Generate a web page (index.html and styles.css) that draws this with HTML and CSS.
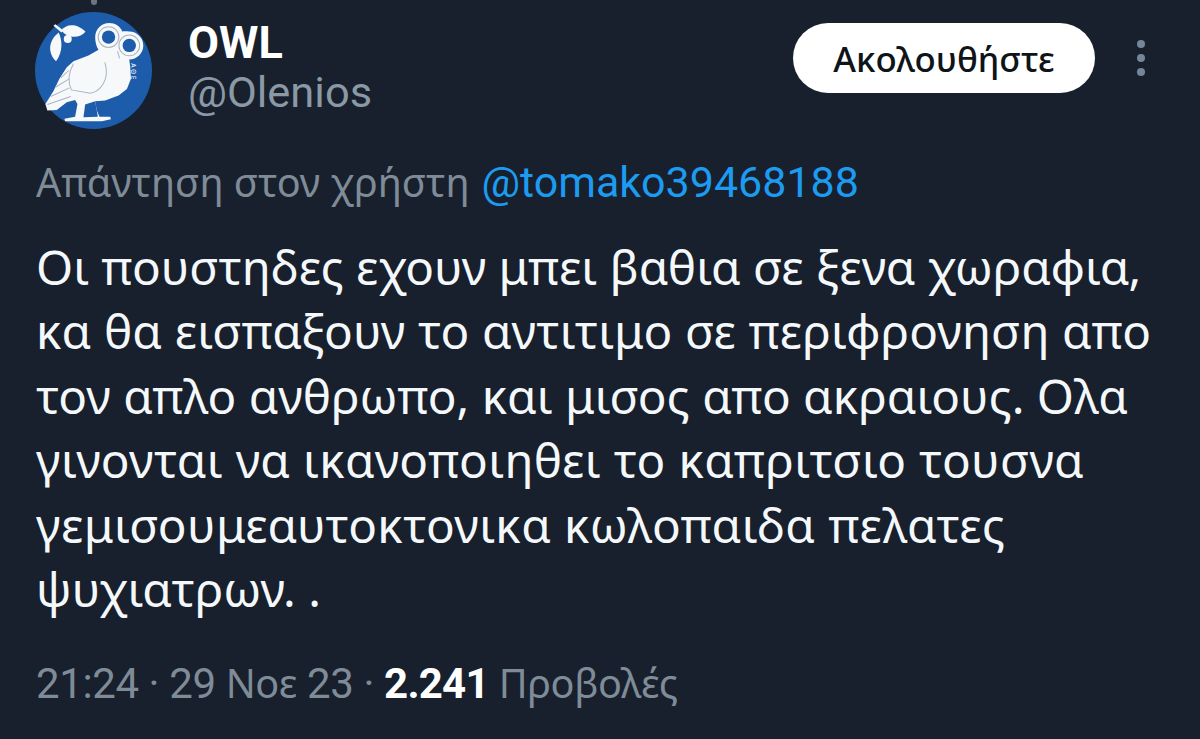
FILE: index.html
```html
<!DOCTYPE html>
<html lang="el">
<head>
<meta charset="utf-8">
<title>OWL</title>
<link rel="stylesheet" href="styles.css">
</head>
<body>
<main class="tweet">
  <span class="thread"></span>
  <header class="head">
    <svg class="avatar" viewBox="15 25 350 350" aria-hidden="true">
      <circle cx="190" cy="200" r="175" fill="#1c5cab"/>
      <g fill="#f6f8fa">
        <path d="M70 66l6-4 24 18-6 6z"/>
        <path d="M94 80c12-18 44-24 72 4-14 18-50 24-72-4z"/>
        <path d="M86 86c10 22 14 56-8 86-20-18-30-56 8-86z"/>
        <circle cx="113" cy="106" r="12"/>
        <path d="M195 100C195 76 215 58 237 58C255 58 270 68 276 83C283 82 290 83 297 83C320 83 339 102 339 125C339 148 320 167 297 167L300 190L302 225L290 255L265 275L225 290L195 292L200 320L208 338L240 338L242 346L215 352L105 352L103 344L135 338L142 300L135 288L110 295L80 318L52 320L46 300L70 262L88 225L110 190L130 172L175 155L205 138C198 128 195 114 195 100Z"/>
      </g>
      <path d="M165 302L195 292L203 338L160 340Z" fill="#1c5cab"/>
      <g fill="none" stroke="#a9b4c2" stroke-width="3">
        <circle cx="235" cy="100" r="31"/>
        <circle cx="297" cy="125" r="31"/>
        <path d="M262 142l6 22"/>
        <path d="M130 180c-12 22-20 50-6 78l56 10c30-4 60-40 44-92"/>
        <path d="M52 302l70-24M62 278l56-26M76 250l40-24M92 222l24-22"/>
      </g>
      <circle cx="235" cy="100" r="20" fill="#1c5cab"/>
      <circle cx="297" cy="125" r="20" fill="#1c5cab"/>
      <text class="avatar-mark" transform="translate(303 178) rotate(90)">ΑΘΕ</text>
    </svg>
    <div class="who">
      <div class="name">OWL</div>
      <div class="handle">@Olenios</div>
    </div>
    <button class="follow">Ακολουθήστε</button>
    <div class="more" aria-label="Περισσότερα"><i></i><i></i><i></i></div>
  </header>
  <p class="reply"><span class="greek">Απάντηση στον χρήστη</span> <span class="mention">@tomako39468188</span></p>
  <p class="body">Οι πουστηδες εχουν μπει βαθια σε ξενα χωραφια,<br><span class="airy-s">κα θα εισπαξουν το αντιτιμο σε περιφρονηση απο</span><br>τον απλο ανθρωπο, και μισος απο ακραιους. Ολα<br><span class="airy">γινονται να ικανοποιηθει το καπριτσιο τουσνα</span><br><span class="airy">γεμισουμεαυτοκτονικα κωλοπαιδα πελατες</span><br>ψυχιατρων. .</p>
  <p class="meta">21:24 · 29 <span class="greek">Νοε</span> 23 · <b>2.241</b> <span class="greek">Προβολές</span></p>
</main>
</body>
</html>
```
FILE: styles.css
```css
* { box-sizing: border-box; }
html, body { margin: 0; height: 100%; }
body {
  background: #17202c;
  font-family: Roboto, "Noto Sans", sans-serif;
  overflow: hidden;
}
.tweet { position: relative; padding: 12px 0 0 36px; }
.thread { position: absolute; left: 91px; top: 0; width: 6px; height: 5px; background: #6b7683; border-radius: 0 0 3px 3px; }
.head { display: flex; align-items: flex-start; }
.avatar { width: 117px; height: 117px; flex: none; margin-left: -1px; }
.who { margin-left: 36px; flex: 1; }
.name { color: #fff; font-size: 45px; font-weight: 700; line-height: 52px; margin-top: 5px; }
.handle { color: #8b98a5; font-size: 43.4px; line-height: 50px; margin-top: -1px; }
.follow {
  margin-top: 11px;
  width: 302px; height: 70px;
  border: 0; border-radius: 35px;
  background: #fff; color: #0f1419;
  font-family: "Noto Sans", sans-serif;
  font-size: 34.8px; font-weight: 500;
  padding: 0;
  flex: none;
}
.more { display: flex; flex-direction: column; gap: 6px; margin: 28px 55px 0 42px; width: 8px; flex: none; }
.more i { width: 8px; height: 8px; border-radius: 50%; background: #76869a; }
.avatar-mark { fill: #f6f8fa; font-size: 20px; letter-spacing: 5px; font-family: "Noto Sans", sans-serif; }
.greek { font-family: "Noto Sans", sans-serif; }
.reply { margin: 27px 0 0; color: #7f8c98; font-size: 39.6px; line-height: 52px; white-space: nowrap; }
.mention { color: #1d9bf0; font-family: Roboto, sans-serif; font-size: 43px; margin-left: 2px; }
.body { margin: 25px 0 0; color: #f5f8fa; font-family: "Noto Sans", sans-serif; font-size: 47.6px; line-height: 64.4px; white-space: nowrap; }
.airy { letter-spacing: 0.4px; }
.airy-s { letter-spacing: 0.15px; }
.meta { margin: 36px 0 0; color: #7f8c98; font-size: 42px; line-height: 52px; letter-spacing: -0.4px; white-space: nowrap; }
.meta .greek { font-size: 39.6px; letter-spacing: -0.4px; }
.meta b { color: #fff; font-weight: 700; letter-spacing: -0.8px; }
```
